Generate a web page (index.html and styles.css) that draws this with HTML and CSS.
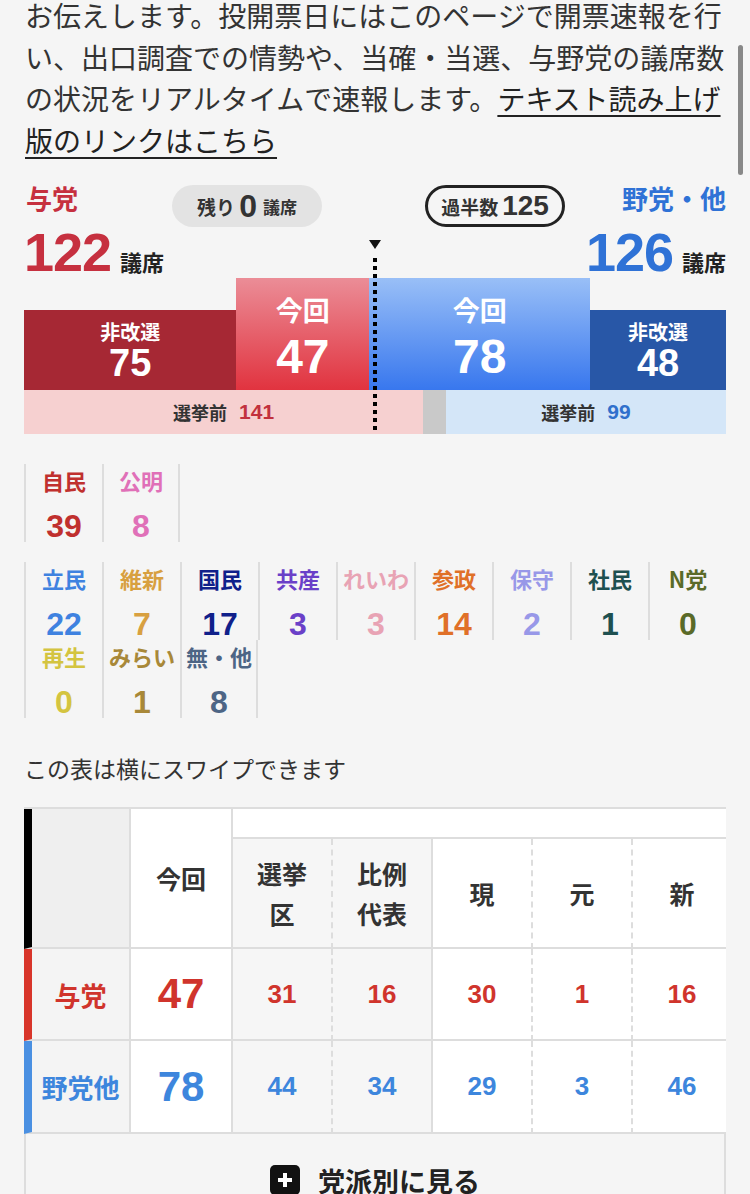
FILE: index.html
```html
<!DOCTYPE html>
<html lang="ja">
<head>
  <meta charset="UTF-8">
  <meta name="viewport" content="width=device-width, initial-scale=1.0">
  <title>参院選 開票速報</title>
  <link rel="stylesheet" href="styles.css">
</head>
<body>
  <div class="scroll-thumb"></div>
  <div class="page">
    <p class="intro">お伝えします。投開票日にはこのページで開票速報を行い、出口調査での情勢や、当確・当選、与野党の議席数の状況をリアルタイムで速報します。<a href="#">テキスト読み上げ版のリンクはこちら</a></p>

    <!-- 与野党の議席数 -->
    <div class="seats-top">
      <div class="side-name ruling">与党</div>
      <div class="pill-remain">残り<span class="num">0</span><span class="pill-unit">議席</span></div>
      <div class="pill-majority">過半数<span class="num">125</span></div>
      <div class="side-name opposition">野党・他</div>
    </div>
    <div class="seats-total">
      <div class="total ruling"><span class="num">122</span><span class="total-unit">議席</span></div>
      <div class="total opposition"><span class="num">126</span><span class="total-unit">議席</span></div>
    </div>

    <div class="bars">
      <div class="bar-row">
        <div class="seg seg-keep seg-keep-r" style="flex: 75">
          <span class="seg-label">非改選</span><span class="seg-num">75</span>
        </div>
        <div class="seg seg-now seg-now-r" style="flex: 47">
          <span class="seg-label">今回</span><span class="seg-num">47</span>
        </div>
        <div class="seg seg-now seg-now-o" style="flex: 78">
          <span class="seg-label">今回</span><span class="seg-num">78</span>
        </div>
        <div class="seg seg-keep seg-keep-o" style="flex: 48">
          <span class="seg-label">非改選</span><span class="seg-num">48</span>
        </div>
      </div>
      <div class="pre-row">
        <div class="pre pre-r" style="flex: 141">選挙前<span class="num">141</span></div>
        <div class="pre pre-gap" style="flex: 8"></div>
        <div class="pre pre-o" style="flex: 99">選挙前<span class="num">99</span></div>
      </div>
      <div class="majority-mark"></div>
      <div class="majority-line"></div>
    </div>

    <!-- 党派別 -->
    <div class="parties">
      <div class="party-group">
        <div class="party c-jimin"><span class="party-name">自民</span><span class="party-num">39</span></div>
        <div class="party c-komei"><span class="party-name">公明</span><span class="party-num">8</span></div>
      </div>
      <div class="party-group">
        <div class="party c-rikken"><span class="party-name">立民</span><span class="party-num">22</span></div>
        <div class="party c-ishin"><span class="party-name">維新</span><span class="party-num">7</span></div>
        <div class="party c-kokumin"><span class="party-name">国民</span><span class="party-num">17</span></div>
        <div class="party c-kyosan"><span class="party-name">共産</span><span class="party-num">3</span></div>
        <div class="party c-reiwa"><span class="party-name">れいわ</span><span class="party-num">3</span></div>
        <div class="party c-sansei"><span class="party-name">参政</span><span class="party-num">14</span></div>
        <div class="party c-hoshu"><span class="party-name">保守</span><span class="party-num">2</span></div>
        <div class="party c-shamin"><span class="party-name">社民</span><span class="party-num">1</span></div>
        <div class="party c-ntou"><span class="party-name">N党</span><span class="party-num">0</span></div>
        <div class="party c-saisei"><span class="party-name">再生</span><span class="party-num">0</span></div>
        <div class="party c-mirai"><span class="party-name">みらい</span><span class="party-num">1</span></div>
        <div class="party c-other"><span class="party-name">無・他</span><span class="party-num">8</span></div>
      </div>
    </div>

    <p class="note">この表は横にスワイプできます</p>

    <div class="table-wrap">
      <table class="result">
        <colgroup>
          <col class="col-label">
          <col class="col-now">
          <col class="col-n"><col class="col-n"><col class="col-n"><col class="col-n"><col class="col-n">
        </colgroup>
        <thead>
          <tr class="group-row">
            <th class="row-head head-black" rowspan="2"></th>
            <th class="h-now" rowspan="2">今回</th>
            <th class="h-group" colspan="5"></th>
          </tr>
          <tr class="sub-row">
            <th class="gray dashed">選挙<br>区</th>
            <th class="gray">比例<br>代表</th>
            <th class="dashed">現</th>
            <th class="dashed">元</th>
            <th>新</th>
          </tr>
        </thead>
        <tbody>
          <tr class="r-ruling">
            <td class="row-head">与党</td>
            <td class="big">47</td>
            <td class="gray dashed">31</td>
            <td class="gray">16</td>
            <td class="dashed">30</td>
            <td class="dashed">1</td>
            <td>16</td>
          </tr>
          <tr class="r-opp">
            <td class="row-head">野党他</td>
            <td class="big">78</td>
            <td class="gray dashed">44</td>
            <td class="gray">34</td>
            <td class="dashed">29</td>
            <td class="dashed">3</td>
            <td>46</td>
          </tr>
        </tbody>
      </table>
    </div>

    <div class="more">
      <svg width="30" height="30" viewBox="0 0 30 30">
        <rect width="30" height="30" rx="5" fill="#111"/>
        <path d="M15 8v14M8 15h14" stroke="#fff" stroke-width="4"/>
      </svg>
      <span>党派別に見る</span>
    </div>
  </div>
</body>
</html>
```

FILE: styles.css
```css
* {
  box-sizing: border-box;
  margin: 0;
  padding: 0;
}
html {
  overflow: hidden;
}
body {
  font-family: "Noto Sans CJK JP", sans-serif;
  background: #f5f5f5;
  color: #333;
}
.num {
  font-family: "Liberation Sans", Arial, sans-serif;
  font-weight: bold;
}
.scroll-thumb {
  position: absolute;
  top: 45px;
  right: 7px;
  width: 5px;
  height: 130px;
  border-radius: 3px;
  background: #888;
}
.page {
  padding: 0 24px;
}

/* 説明文 */
.intro {
  font-size: 28px;
  line-height: 41.6px;
  margin-top: -5px;
  padding: 0 1px;
}
.intro a {
  color: #222;
  text-decoration: underline;
  text-decoration-thickness: 2px;
  text-underline-offset: 5px;
}

/* 議席数ヘッダー */
.ruling {
  color: #c6303f;
}
.opposition {
  color: #2f72d6;
}
.seats-top {
  display: flex;
  align-items: center;
  height: 42px;
  margin-top: 24px;
}
.side-name {
  align-self: flex-start;
  font-size: 26px;
  font-weight: bold;
  line-height: 1;
  padding-left: 2px;
}
.side-name.opposition {
  margin-left: auto;
  padding-left: 0;
}
.pill-remain {
  display: flex;
  align-items: center;
  justify-content: center;
  width: 150px;
  height: 42px;
  margin-left: 94px;
  border-radius: 21px;
  background: #e3e3e3;
  font-size: 19px;
  font-weight: bold;
  color: #333;
}
.pill-remain .num {
  font-size: 32px;
  margin: 0 6px 0 4px;
}
.pill-unit {
  font-size: 17px;
}
.pill-majority {
  display: flex;
  align-items: center;
  justify-content: center;
  width: 140px;
  height: 42px;
  margin-left: 103px;
  border: 3px solid #222;
  border-radius: 21px;
  font-size: 19px;
  font-weight: bold;
  color: #333;
}
.pill-majority .num {
  font-size: 28px;
  margin-left: 4px;
}
.seats-total {
  display: flex;
  justify-content: space-between;
  align-items: baseline;
  margin-top: 2px;
}
.total .num {
  font-size: 54px;
  line-height: 46px;
  letter-spacing: -1px;
}
.total-unit {
  font-size: 22px;
  font-weight: bold;
  color: #222;
  margin-left: 9px;
}

/* 棒グラフ */
.bars {
  position: relative;
  margin-top: 1px;
}
.bar-row {
  display: flex;
  align-items: flex-end;
  height: 112px;
}
.seg {
  display: flex;
  flex-direction: column;
  align-items: center;
  color: #fff;
  font-weight: bold;
}
.seg-label {
  font-size: 20px;
  line-height: 24px;
}
.seg-num {
  font-family: "Liberation Sans", Arial, sans-serif;
  font-size: 38px;
  line-height: 38px;
}
.seg-keep {
  height: 80px;
  padding-top: 10px;
}
.seg-now {
  height: 112px;
  padding-top: 16px;
}
.seg-now .seg-label {
  font-size: 27px;
  line-height: 32px;
}
.seg-now .seg-num {
  font-size: 48px;
  line-height: 44px;
  margin-top: 9px;
}
.seg-keep-r {
  background: #a62834;
}
.seg-now-r {
  background: linear-gradient(#eb8d97, #e1333f);
}
.seg-now-o {
  background: linear-gradient(#99bff7, #3877ee);
}
.seg-keep-o {
  background: #2857a7;
}
.pre-row {
  display: flex;
  height: 44px;
}
.pre {
  display: flex;
  align-items: center;
  justify-content: center;
  font-size: 18px;
  font-weight: bold;
  color: #333;
}
.pre .num {
  font-size: 21px;
  margin-left: 12px;
}
.pre-r {
  background: #f6d0d0;
}
.pre-r .num {
  color: #c2313e;
}
.pre-gap {
  background: #c9c9c9;
}
.pre-o {
  background: #d4e6f8;
}
.pre-o .num {
  color: #3070cc;
}
.majority-line {
  position: absolute;
  left: calc(50% - 2px);
  top: -20px;
  bottom: 4px;
  width: 4px;
  background: repeating-linear-gradient(#000 0 4px, transparent 4px 8px);
}
.majority-mark {
  position: absolute;
  left: calc(50% - 6px);
  top: -38px;
  border-left: 6px solid transparent;
  border-right: 6px solid transparent;
  border-top: 9px solid #111;
}

/* 党派別 */
.parties {
  margin-top: 30px;
}
.party-group {
  display: grid;
  grid-template-columns: repeat(9, 78px);
}
.party-group + .party-group {
  margin-top: 20px;
}
.party {
  display: flex;
  flex-direction: column;
  align-items: center;
  height: 78px;
  padding-top: 1px;
  border-left: 2px solid #ddd;
  font-weight: bold;
}
.party:last-child {
  border-right: 2px solid #ddd;
}
.party-name {
  font-size: 22px;
  line-height: 30px;
  white-space: nowrap;
}
.party-num {
  font-family: "Liberation Sans", Arial, sans-serif;
  font-size: 32px;
  line-height: 32px;
  margin-top: 15px;
}
.c-jimin { color: #c0302e; }
.c-komei { color: #e070b8; }
.c-rikken { color: #3f82e0; }
.c-ishin { color: #d8a040; }
.c-kokumin { color: #10208a; }
.c-kyosan { color: #6a40c8; }
.c-reiwa { color: #e8a3b4; }
.c-sansei { color: #e07028; }
.c-hoshu { color: #9898e8; }
.c-shamin { color: #1e5050; }
.c-ntou { color: #5a6a28; }
.c-saisei { color: #d4c440; }
.c-mirai { color: #a88838; }
.c-other { color: #4d6585; }

.note {
  margin-top: 34px;
  font-size: 23px;
  line-height: 32px;
}

/* 表 */
.table-wrap {
  margin-top: 23px;
  overflow: hidden;
  border-top: 2px solid #ddd;
}
.result {
  border-collapse: separate;
  border-spacing: 0;
  table-layout: fixed;
  width: 709px;
}
.col-label {
  width: 107px;
}
.col-now {
  width: 102px;
}
.col-n {
  width: 100px;
}
.result th,
.result td {
  padding: 0;
  text-align: center;
  vertical-align: middle;
  background: #fff;
  border-right: 2px solid #ddd;
  border-bottom: 2px solid #ddd;
  font-weight: bold;
}
.result th {
  font-size: 25px;
  line-height: 40px;
  color: #333;
}
.result .dashed {
  border-right-style: dashed;
}
.result .gray {
  background: #f6f6f6;
}
.group-row {
  height: 30px;
}
.sub-row {
  height: 110px;
}
.result th.row-head {
  background: #efefef;
}
.head-black {
  border-left: 8px solid #000;
}
.result td.row-head {
  background: #f4f4f4;
  font-size: 26px;
  white-space: nowrap;
}
.result tbody tr {
  height: 92px;
}
.result tbody tr.r-opp {
  height: 93px;
}
.result td {
  font-family: "Liberation Sans", Arial, sans-serif;
  font-size: 26px;
}
.result td.big {
  font-size: 42px;
}
.r-ruling td {
  color: #d0342c;
}
.r-ruling .row-head {
  border-left: 8px solid #d8352a;
}
.r-opp td {
  color: #3d86dd;
}
.r-opp .row-head {
  border-left: 8px solid #4a90e2;
}
.result td.row-head {
  font-family: "Noto Sans CJK JP", sans-serif;
}

.more {
  display: flex;
  align-items: center;
  justify-content: center;
  gap: 18px;
  height: 94px;
  border: 2px solid #ddd;
  border-top: 0;
  background: #f5f5f5;
  font-size: 27px;
  font-weight: bold;
  color: #222;
}
.more svg {
  flex: none;
}
```
